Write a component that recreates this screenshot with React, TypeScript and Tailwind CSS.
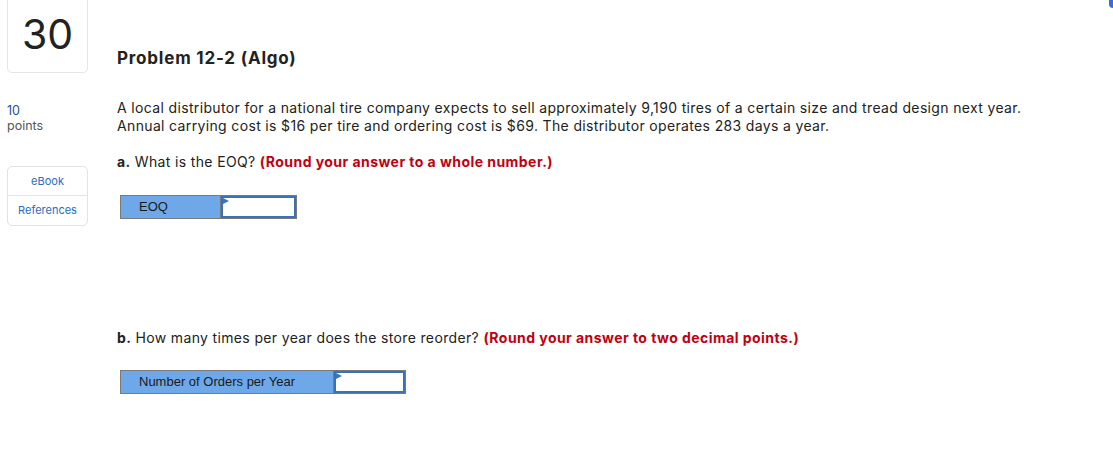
import React from "react";

const AnswerRow = ({ label, labelW, inputW }: { label: string; labelW: string; inputW: string }) => (
  <div className="flex h-[24px] border border-[#7a7a7a] w-fit">
    <div
      className={`${labelW} bg-[#6fa8e9] border-r border-[#7a7a7a] flex items-center pl-[18px] text-[13px] text-[#1a1a1a]`}
      style={{ fontFamily: "'Liberation Sans', Arial, sans-serif" }}
    >
      {label}
    </div>
    <div className={`${inputW} relative bg-white border-2 border-[#3a72b8]`}>
      <svg className="absolute left-0 top-0" width="6" height="6" viewBox="0 0 6 6">
        <polygon points="0,0 6,3 0,6" fill="#3a72c8" />
      </svg>
    </div>
  </div>
);

export default function App() {
  return (
    <div
      className="relative w-[1113px] h-[449px] bg-white overflow-hidden text-[#222]"
      style={{ fontFamily: "Inter, 'Open Sans', sans-serif" }}
    >
      <div className="absolute right-0 top-0 w-[4px] h-[8px] bg-[#2d74d6] rounded-bl-sm" />
      <div className="flex">
        {/* left column */}
        <div className="w-[117px] pl-[7px] shrink-0">
          <div className="w-[81px] h-[74px] -mt-px border border-[#e6e6e6] rounded-b-[5px] flex items-center justify-center pb-[4px]">
            <span className="text-[41px] leading-none text-[#222]">30</span>
          </div>
          <div className="mt-[30px] text-[12.5px] leading-[15px]">
            <div className="text-[#1b4f9a]">10</div>
            <div className="text-[#555]">points</div>
          </div>
          <div className="mt-[33px] w-[81px] border border-[#e3e3e3] rounded-[5px] text-[11px] text-[#2a6bc0]">
            <div className="h-[29px] flex items-center justify-center border-b border-[#e3e3e3]">eBook</div>
            <div className="h-[29px] flex items-center justify-center">References</div>
          </div>
        </div>

        {/* main */}
        <div className="pt-[47px] tracking-[0.35px]">
          <h1 className="text-[17px] font-bold leading-[22px] tracking-[0.8px] text-[#222]">Problem 12-2 (Algo)</h1>
          <p className="mt-[30px] text-[14px] leading-[18px] text-[#222]">
            A local distributor for a national tire company expects to sell approximately 9,190 tires of a certain size and tread design next year.
            <br />
            Annual carrying cost is $16 per tire and ordering cost is $69. The distributor operates 283 days a year.
          </p>
          <p className="mt-[18px] text-[14px] leading-[18px]">
            <b className="font-bold">a.</b> What is the EOQ?{" "}
            <b className="font-bold tracking-[0.45px] text-[#c00010]">(Round your answer to a whole number.)</b>
          </p>
          <div className="mt-[24px] ml-[3px] tracking-normal">
            <AnswerRow label="EOQ" labelW="w-[100px]" inputW="w-[75px]" />
          </div>
          <p className="mt-[110px] text-[14px] leading-[18px]">
            <b className="font-bold">b.</b> How many times per year does the store reorder?{" "}
            <b className="font-bold tracking-[0.45px] text-[#c00010]">(Round your answer to two decimal points.)</b>
          </p>
          <div className="mt-[23px] ml-[3px] tracking-normal">
            <AnswerRow label="Number of Orders per Year" labelW="w-[213px]" inputW="w-[71px]" />
          </div>
        </div>
      </div>
    </div>
  );
}
